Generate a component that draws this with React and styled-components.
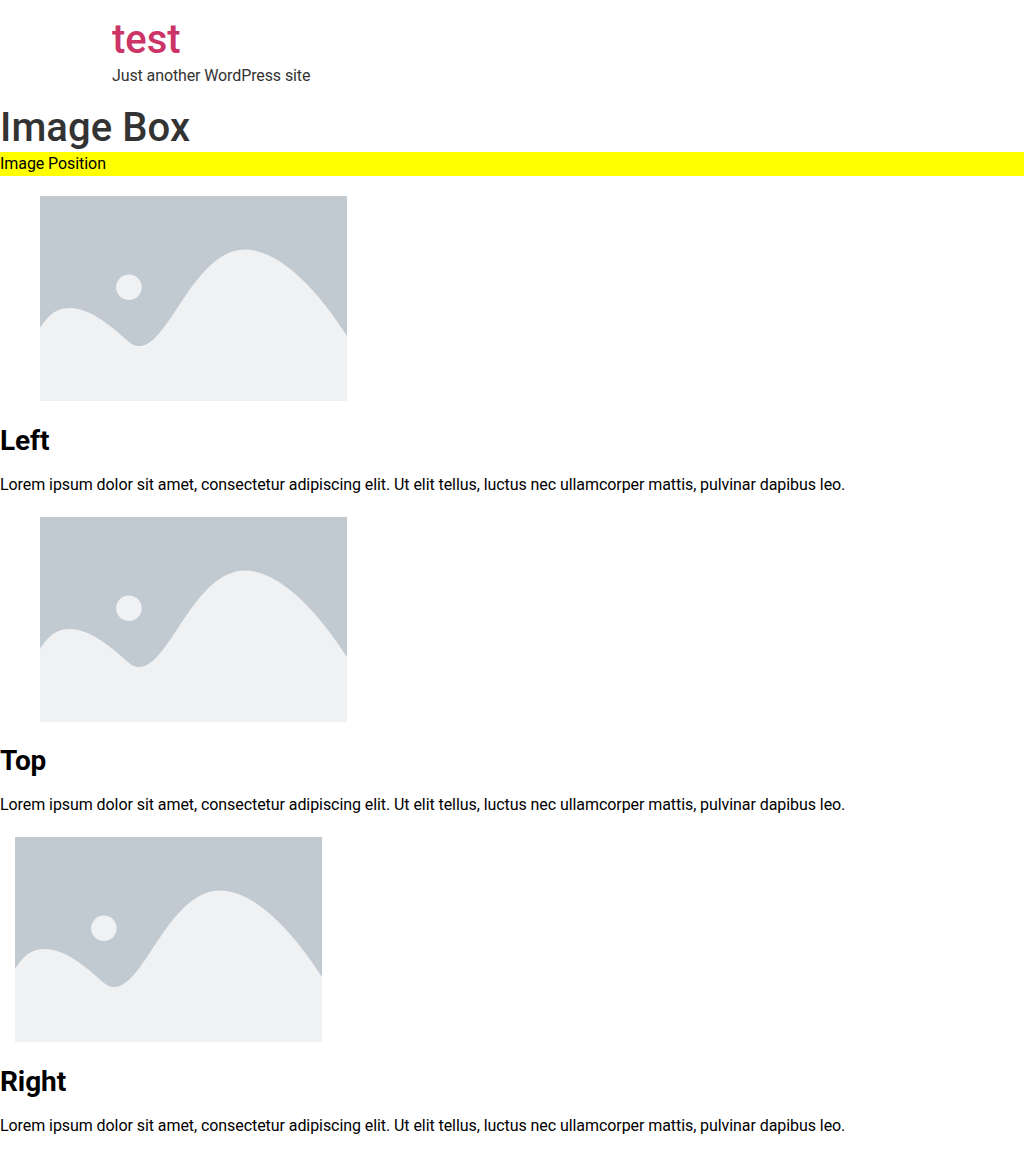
import React from 'react';
import styled, { createGlobalStyle } from 'styled-components';

const GlobalStyle = createGlobalStyle`
  *, *::before, *::after { box-sizing: border-box; }
  html { line-height: 1.15; }
  body {
    margin: 0;
    font-family: Roboto, "Liberation Sans", sans-serif;
    font-size: 16px;
    font-weight: 400;
    line-height: 1.5;
    color: #333;
    background: #fff;
    overflow: hidden;
  }
`;

const Header = styled.header`
  width: 800px;
  margin: 0 auto;
  padding: 16px 0;
`;

const SiteTitle = styled.h1`
  margin: 0;
  font-size: 40px;
  font-weight: 500;
  line-height: 48px;
`;

const SiteLink = styled.a`
  color: #c36;
  text-decoration: none;
`;

const Tagline = styled.p`
  margin: 0;
  letter-spacing: -0.11px;
`;

const PageTitle = styled.h1`
  margin: 0;
  font-size: 40px;
  font-weight: 500;
  line-height: 48px;
  letter-spacing: 0.08px;
`;

const SectionBar = styled.div`
  background: #ff0;
  color: #000;
  letter-spacing: -0.07px;
`;

const Box = styled.section`
  padding-top: 20px;
  color: #000;
`;

const Figure = styled.figure`
  margin: 0 0 0 ${({ $indent }) => $indent}px;
  height: 205px;
`;

const Picture = styled.svg`
  display: block;
  width: 307px;
  height: 205px;
`;

const BoxTitle = styled.h3`
  margin: 0;
  padding-top: 22.6px;
  font-size: 28px;
  font-weight: 700;
  line-height: 34px;
  letter-spacing: -0.1px;
`;

const BoxText = styled.p`
  margin: 0;
  padding: 15px 0 0;
  letter-spacing: -0.07px;
`;

const Placeholder = () => (
  <Picture viewBox="0 0 307 205" role="img">
    <rect width="307" height="205" fill="#c1c9d1" />
    <path
      d="M0 131.500C5 125 9 119 15 115.700C20 113 25 112 29.500 112C50 112 70 129 90 146.700C93 149.300 96 150 99.500 150C129 150 154 53.500 205 53.500C239 53.500 277 93 307 140V205H0Z"
      fill="#f0f1f3"
    />
    <circle cx="88.900" cy="91.300" r="12.800" fill="#f0f1f3" />
  </Picture>
);

const boxes = [
  { title: 'Left', indent: 40 },
  { title: 'Top', indent: 40 },
  { title: 'Right', indent: 15 },
];

export default function App() {
  return (
    <>
      <GlobalStyle />
      <Header>
        <SiteTitle><SiteLink>test</SiteLink></SiteTitle>
        <Tagline>Just another WordPress site</Tagline>
      </Header>
      <main>
        <PageTitle>Image Box</PageTitle>
        <SectionBar>Image Position</SectionBar>
        {boxes.map(({ title, indent }) => (
          <Box key={title}>
            <Figure $indent={indent}><Placeholder /></Figure>
            <BoxTitle>{title}</BoxTitle>
            <BoxText>
              Lorem ipsum dolor sit amet, consectetur adipiscing elit. Ut elit tellus, luctus nec
              ullamcorper mattis, pulvinar dapibus leo.
            </BoxText>
          </Box>
        ))}
      </main>
    </>
  );
}
